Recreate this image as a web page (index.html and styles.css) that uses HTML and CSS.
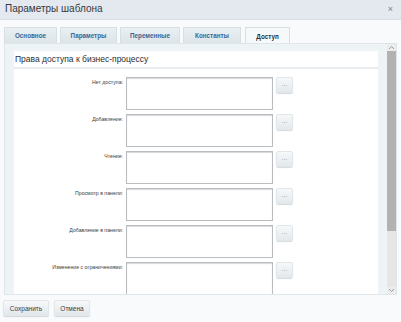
FILE: index.html
```html
<!DOCTYPE html>
<html lang="ru">
<head>
<meta charset="utf-8">
<link rel="stylesheet" href="styles.css">
</head>
<body>
<div class="dialog">
  <div class="header">
    <span class="title">Параметры шаблона</span>
    <span class="close">×</span>
  </div>
  <div class="tabs">
    <div class="tab t1">Основное</div>
    <div class="tab t2">Параметры</div>
    <div class="tab t3">Переменные</div>
    <div class="tab t4">Константы</div>
    <div class="tab t5 active">Доступ</div>
  </div>
  <div class="panel">
    <div class="content">
      <div class="inner">
        <div class="section-title">Права доступа к бизнес-процессу</div>
        <div class="rows">
          <div class="row"><div class="label">Нет доступа:</div><div class="field"></div><div class="dots">...</div></div>
          <div class="row"><div class="label">Добавление:</div><div class="field"></div><div class="dots">...</div></div>
          <div class="row"><div class="label">Чтение:</div><div class="field"></div><div class="dots">...</div></div>
          <div class="row"><div class="label">Просмотр в панели:</div><div class="field"></div><div class="dots">...</div></div>
          <div class="row"><div class="label">Добавление в панели:</div><div class="field"></div><div class="dots">...</div></div>
          <div class="row"><div class="label">Изменение с ограничениями:</div><div class="field"></div><div class="dots">...</div></div>
        </div>
      </div>
    </div>
    <div class="scrollbar">
      <div class="arrow up"><svg width="7" height="5" viewBox="0 0 7 5"><path d="M1 4 L3.5 1.5 L6 4" fill="none" stroke="#9a9a9a" stroke-width="1"/></svg></div>
      <div class="thumb"></div>
      <div class="track"></div>
      <div class="arrow down"><svg width="7" height="5" viewBox="0 0 7 5"><path d="M1 1 L3.5 3.5 L6 1" fill="none" stroke="#9a9a9a" stroke-width="1"/></svg></div>
    </div>
  </div>
  <div class="footer">
    <div class="btn save">Сохранить</div>
    <div class="btn cancel">Отмена</div>
  </div>
</div>
</body>
</html>
```

FILE: styles.css
```css
html, body {
  margin: 0;
  padding: 0;
  background: #f8f9fa;
  font-family: "Liberation Sans", Arial, sans-serif;
  overflow: hidden;
}
.dialog {
  width: 401px;
  height: 322px;
  background: #f9fafb;
  display: flex;
  flex-direction: column;
}
.header {
  background: #e3e9ee;
  border-bottom: 1px solid #d8dee3;
  display: flex;
  align-items: center;
  justify-content: space-between;
  padding: 0 8px 0 5px;
  box-sizing: border-box;
  height: 20px;
}
.title {
  font-size: 10px;
  color: #34393e;
  position: relative;
  top: -1px;
}
.close {
  font-size: 9px;
  color: #7d8185;
  position: relative;
  top: -1px;
}
.tabs {
  display: flex;
  padding: 7px 0 0 4px;
  gap: 3px;
  height: 16px;
}
.tab {
  height: 16px;
  box-sizing: border-box;
  background: linear-gradient(#e9eff2, #dde5e9);
  border: 1px solid #d6dfe3;
  border-bottom: none;
  font-size: 6.3px;
  font-weight: bold;
  color: #3c6591;
  display: flex;
  align-items: center;
  justify-content: center;
}
.t1 { width: 53px; }
.t2 { width: 57px; }
.t3 { width: 60px; }
.t4 { width: 58px; }
.t5 { width: 45px; margin-left: 1px; }
.tab.active {
  background: #f6f9fa;
  color: #2c3135;
  height: 17px;
}
.panel {
  margin: 0 4px 0 4px;
  height: 252px;
  border: 1px solid #dfe6ea;
  background: #eef3f5;
  display: flex;
  box-sizing: border-box;
}
.content {
  flex: 1;
  padding: 7px 9px 0 9px;
  overflow: hidden;
}
.inner {
  background: #ffffff;
  height: 260px;
}
.section-title {
  font-size: 8.5px;
  color: #2a2e32;
  padding: 3px 0 0 1px;
  height: 13px;
  border-bottom: 2px solid #e8ecee;
}
.rows {
  padding-top: 8px;
  display: flex;
  flex-direction: column;
  gap: 4px;
}
.row {
  display: flex;
  align-items: flex-start;
  height: 33px;
}
.label {
  text-align: right;
  font-size: 5.2px;
  color: #3a3e42;
  padding-top: 2px;
  padding-right: 3px;
  box-sizing: border-box;
  width: 112px;
}
.field {
  width: 147px;
  height: 33px;
  box-sizing: border-box;
  border: 1px solid #b9bcc0;
  box-shadow: inset 0 1px 1px #d6d8da;
  background: #fff;
}
.dots {
  margin-left: 3px;
  width: 17px;
  height: 16px;
  box-sizing: border-box;
  border: 1px solid #e1e6e9;
  border-radius: 2px;
  background: linear-gradient(#f6f8f9, #e3e9ec);
  box-shadow: 0 1px 1px #d5dadd;
  font-size: 7px;
  color: #8c99a3;
  display: flex;
  align-items: center;
  justify-content: center;
  line-height: 1;
  padding-bottom: 3px;
}
.scrollbar {
  width: 9px;
  display: flex;
  flex-direction: column;
  background: #e8e8e8;
}
.arrow {
  height: 7px;
  display: flex;
  align-items: center;
  justify-content: center;
  background: #ececec;
}
.thumb {
  height: 180px;
  background: #b2b2b2;
}
.track {
  flex: 1;
  background: #e6e6e6;
}
.footer {
  display: flex;
  gap: 5px;
  padding: 5px 0 0 3px;
}
.btn {
  height: 16px;
  box-sizing: border-box;
  border: 1px solid #e3e7ea;
  border-radius: 2px;
  background: linear-gradient(#f7f9fa, #e2e8eb);
  box-shadow: 0 1px 1px #d2d7da;
  font-size: 6.5px;
  color: #3a4046;
  display: flex;
  align-items: center;
  justify-content: center;
}
.save { width: 46px; }
.cancel { width: 36px; }
```
